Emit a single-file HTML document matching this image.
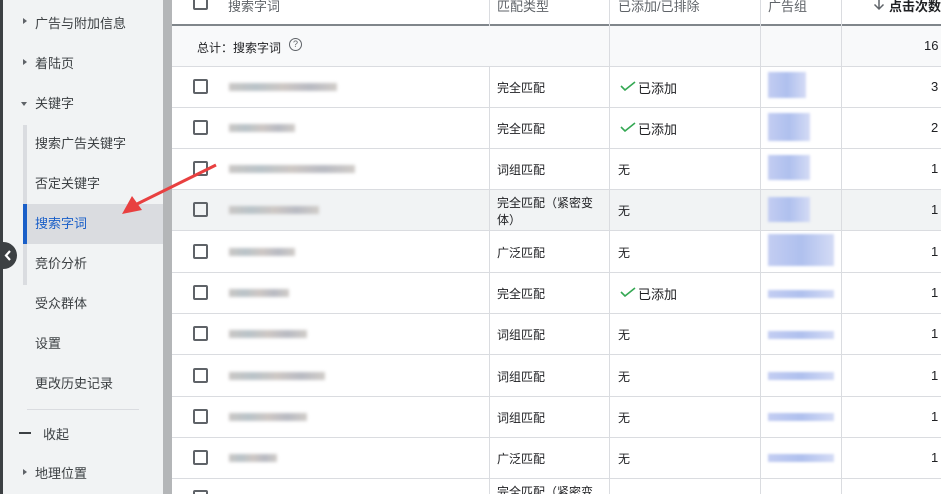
<!DOCTYPE html>
<html style="overflow:hidden;height:494px"><head><meta charset="utf-8"><style>
*{margin:0;padding:0;box-sizing:border-box}
body{width:941px;height:494px;overflow:hidden;background:#fff;font-family:"Liberation Sans","Noto Sans CJK SC",sans-serif;font-size:13px;color:#3c4043;position:relative}
.abs{position:absolute}
#dark{left:0;top:0;width:3px;height:494px;background:#3c4043}
#side{left:3px;top:0;width:160px;height:494px;background:#f1f3f4}
#scroll{left:163px;top:0;width:9px;height:494px;background:#b4b6b8}
.si{position:absolute;font-size:13px;color:#3c4043;white-space:nowrap}
.tri{position:absolute;width:0;height:0}
.cb{position:absolute;width:15px;height:15px;border:2px solid #5f6368;border-radius:2px;left:193px}
.hl{position:absolute;left:172px;width:769px;height:1px;background:#dadce0}
.vl{position:absolute;width:1px;background:#dadce0}
.blur{position:absolute;height:8px;filter:blur(1.5px);background:linear-gradient(90deg,#c9c6c4,#b9c3c8,#cdc7c4,#b8bac2,#d0ccc8)}
.bb{position:absolute;filter:blur(1.2px);background:linear-gradient(90deg,#c3cdf2,#afc0ee,#d4dbf5)}
.t{position:absolute;font-size:12px;color:#202124;white-space:nowrap}
.chk{position:absolute;left:620px;width:16px;height:10px}
</style></head><body>
<div id="dark" class="abs"></div>
<div id="side" class="abs"></div>
<div id="scroll" class="abs"></div>
<div class="tri" style="left:23px;top:18px;border-left:4px solid #5f6368;border-top:3px solid transparent;border-bottom:3px solid transparent"></div>
<div class="si" style="left:35px;top:13px">广告与附加信息</div>
<div class="tri" style="left:23px;top:59px;border-left:4px solid #5f6368;border-top:3px solid transparent;border-bottom:3px solid transparent"></div>
<div class="si" style="left:35px;top:53px">着陆页</div>
<div class="tri" style="left:21px;top:102px;border-top:4px solid #5f6368;border-left:3px solid transparent;border-right:3px solid transparent"></div>
<div class="si" style="left:35px;top:93px">关键字</div>
<div class="abs" style="left:23px;top:125px;width:4px;height:160px;background:#dadce0"></div>
<div class="abs" style="left:27px;top:204px;width:136px;height:40px;background:#dadce0"></div>
<div class="abs" style="left:23px;top:204px;width:4px;height:40px;background:#1a5fc8"></div>
<div class="si" style="left:35px;top:133px">搜索广告关键字</div>
<div class="si" style="left:35px;top:173px">否定关键字</div>
<div class="si" style="left:35px;top:213px;color:#1a5fc8">搜索字词</div>
<div class="si" style="left:35px;top:253px">竞价分析</div>
<div class="si" style="left:35px;top:293px">受众群体</div>
<div class="si" style="left:35px;top:333px">设置</div>
<div class="si" style="left:35px;top:373px">更改历史记录</div>
<div class="abs" style="left:27px;top:409px;width:112px;height:1px;background:#dadce0"></div>
<div class="abs" style="left:19px;top:432px;width:12px;height:2px;background:#3c4043"></div>
<div class="si" style="left:43px;top:424px">收起</div>
<div class="tri" style="left:23px;top:469px;border-left:4px solid #5f6368;border-top:3px solid transparent;border-bottom:3px solid transparent"></div>
<div class="si" style="left:35px;top:463px">地理位置</div>
<div class="abs" style="left:-10px;top:242px;width:27px;height:27px;border-radius:50%;background:#3c4043"></div>
<svg class="abs" style="left:3px;top:249px" width="10" height="13"><path d="M7 2 L3 6.5 L7 11" stroke="#fff" stroke-width="2.2" fill="none"/></svg>
<div class="abs" style="left:172px;top:26px;width:769px;height:40px;background:#f8f9fa"></div>
<div class="abs" style="left:172px;top:190px;width:769px;height:41px;background:#f1f3f4"></div>
<div class="abs" style="left:172px;top:24px;width:769px;height:2px;background:#80868b"></div>
<div class="vl" style="left:489px;top:0;height:26px"></div>
<div class="vl" style="left:489px;top:66px;height:428px"></div>
<div class="vl" style="left:609px;top:0;height:494px"></div>
<div class="vl" style="left:760px;top:0;height:494px"></div>
<div class="vl" style="left:841px;top:0;height:494px"></div>
<div class="cb" style="top:-5px"></div>
<div class="t" style="left:228px;top:-4px;color:#5f6368;font-size:13px">搜索字词</div>
<div class="t" style="left:497px;top:-4px;color:#5f6368;font-size:13px">匹配类型</div>
<div class="t" style="left:618px;top:-4px;color:#5f6368;font-size:13px">已添加/已排除</div>
<div class="t" style="left:768px;top:-4px;color:#5f6368;font-size:13px">广告组</div>
<div class="t" style="left:889px;top:-4px;font-weight:bold;font-size:13px">点击次数</div>
<svg class="abs" style="left:873px;top:-2px" width="12" height="13"><path d="M6 0 V11 M1.5 6.5 L6 11 L10.5 6.5" stroke="#5f6368" stroke-width="1.5" fill="none"/></svg>
<div class="t" style="left:197px;top:39px">总计：搜索字词</div>
<div class="abs" style="left:289px;top:38px;width:13px;height:13px;border:1.3px solid #5f6368;border-radius:50%;font-size:9px;text-align:center;line-height:11px;color:#5f6368">?</div>
<div class="t" style="left:924px;top:38px;font-size:13px">16</div>

<div class="hl" style="top:66px"></div><div class="hl" style="top:107px"></div><div class="hl" style="top:148px"></div><div class="hl" style="top:189px"></div><div class="hl" style="top:230px"></div><div class="hl" style="top:272px"></div><div class="hl" style="top:313px"></div><div class="hl" style="top:354px"></div><div class="hl" style="top:396px"></div><div class="hl" style="top:437px"></div><div class="hl" style="top:478px"></div>

<div class="cb" style="top:79px"></div><div class="blur" style="left:229px;top:83px;width:108px"></div><div class="t" style="left:497px;top:79px">完全匹配</div>
<svg class="chk" style="top:81px"><path d="M1 5 L5 9 L15 1" stroke="#34a853" stroke-width="1.6" fill="none"/></svg><div class="t" style="left:638px;top:78px;font-size:13px">已添加</div>
<div class="bb" style="left:768px;top:72px;width:38px;height:26px"></div><div class="t" style="left:931px;top:79px;font-size:13px">3</div>

<div class="cb" style="top:120px"></div><div class="blur" style="left:229px;top:124px;width:66px"></div><div class="t" style="left:497px;top:120px">完全匹配</div>
<svg class="chk" style="top:122px"><path d="M1 5 L5 9 L15 1" stroke="#34a853" stroke-width="1.6" fill="none"/></svg><div class="t" style="left:638px;top:119px;font-size:13px">已添加</div>
<div class="bb" style="left:768px;top:113px;width:42px;height:28px"></div><div class="t" style="left:931px;top:120px;font-size:13px">2</div>

<div class="cb" style="top:161px"></div><div class="blur" style="left:229px;top:165px;width:126px"></div><div class="t" style="left:497px;top:161px">词组匹配</div><div class="t" style="left:618px;top:161px">无</div>
<div class="bb" style="left:768px;top:155px;width:42px;height:25px"></div><div class="t" style="left:931px;top:161px;font-size:13px">1</div>

<div class="cb" style="top:202px"></div><div class="blur" style="left:229px;top:206px;width:90px"></div><div class="t" style="left:497px;top:195px;line-height:17px">完全匹配（紧密变<br>体）</div><div class="t" style="left:618px;top:202px">无</div>
<div class="bb" style="left:768px;top:197px;width:42px;height:25px"></div><div class="t" style="left:931px;top:202px;font-size:13px">1</div>

<div class="cb" style="top:244px"></div><div class="blur" style="left:229px;top:248px;width:66px"></div><div class="t" style="left:497px;top:244px">广泛匹配</div><div class="t" style="left:618px;top:244px">无</div>
<div class="bb" style="left:768px;top:234px;width:66px;height:32px"></div><div class="t" style="left:931px;top:244px;font-size:13px">1</div>

<div class="cb" style="top:285px"></div><div class="blur" style="left:229px;top:289px;width:60px"></div><div class="t" style="left:497px;top:285px">完全匹配</div>
<svg class="chk" style="top:287px"><path d="M1 5 L5 9 L15 1" stroke="#34a853" stroke-width="1.6" fill="none"/></svg><div class="t" style="left:638px;top:284px;font-size:13px">已添加</div>
<div class="bb" style="left:768px;top:290px;width:66px;height:8px"></div><div class="t" style="left:931px;top:285px;font-size:13px">1</div>

<div class="cb" style="top:326px"></div><div class="blur" style="left:229px;top:330px;width:78px"></div><div class="t" style="left:497px;top:326px">词组匹配</div><div class="t" style="left:618px;top:326px">无</div>
<div class="bb" style="left:768px;top:331px;width:66px;height:8px"></div><div class="t" style="left:931px;top:326px;font-size:13px">1</div>

<div class="cb" style="top:368px"></div><div class="blur" style="left:229px;top:372px;width:96px"></div><div class="t" style="left:497px;top:368px">词组匹配</div><div class="t" style="left:618px;top:368px">无</div>
<div class="bb" style="left:768px;top:372px;width:66px;height:8px"></div><div class="t" style="left:931px;top:368px;font-size:13px">1</div>

<div class="cb" style="top:409px"></div><div class="blur" style="left:229px;top:413px;width:78px"></div><div class="t" style="left:497px;top:409px">词组匹配</div><div class="t" style="left:618px;top:409px">无</div>
<div class="bb" style="left:768px;top:413px;width:66px;height:8px"></div><div class="t" style="left:931px;top:409px;font-size:13px">1</div>

<div class="cb" style="top:450px"></div><div class="blur" style="left:229px;top:454px;width:48px"></div><div class="t" style="left:497px;top:450px">广泛匹配</div><div class="t" style="left:618px;top:450px">无</div>
<div class="bb" style="left:768px;top:454px;width:66px;height:8px"></div><div class="t" style="left:931px;top:450px;font-size:13px">1</div>

<div class="cb" style="top:490px"></div><div class="t" style="left:497px;top:483px">完全匹配（紧密变</div>
<svg class="abs" style="left:110px;top:160px" width="110" height="60"><path d="M106 5 L25 45" stroke="#e84040" stroke-width="3"/><path d="M12 54 L22 36 L32 50 Z" fill="#e84040"/></svg>
</body></html>
